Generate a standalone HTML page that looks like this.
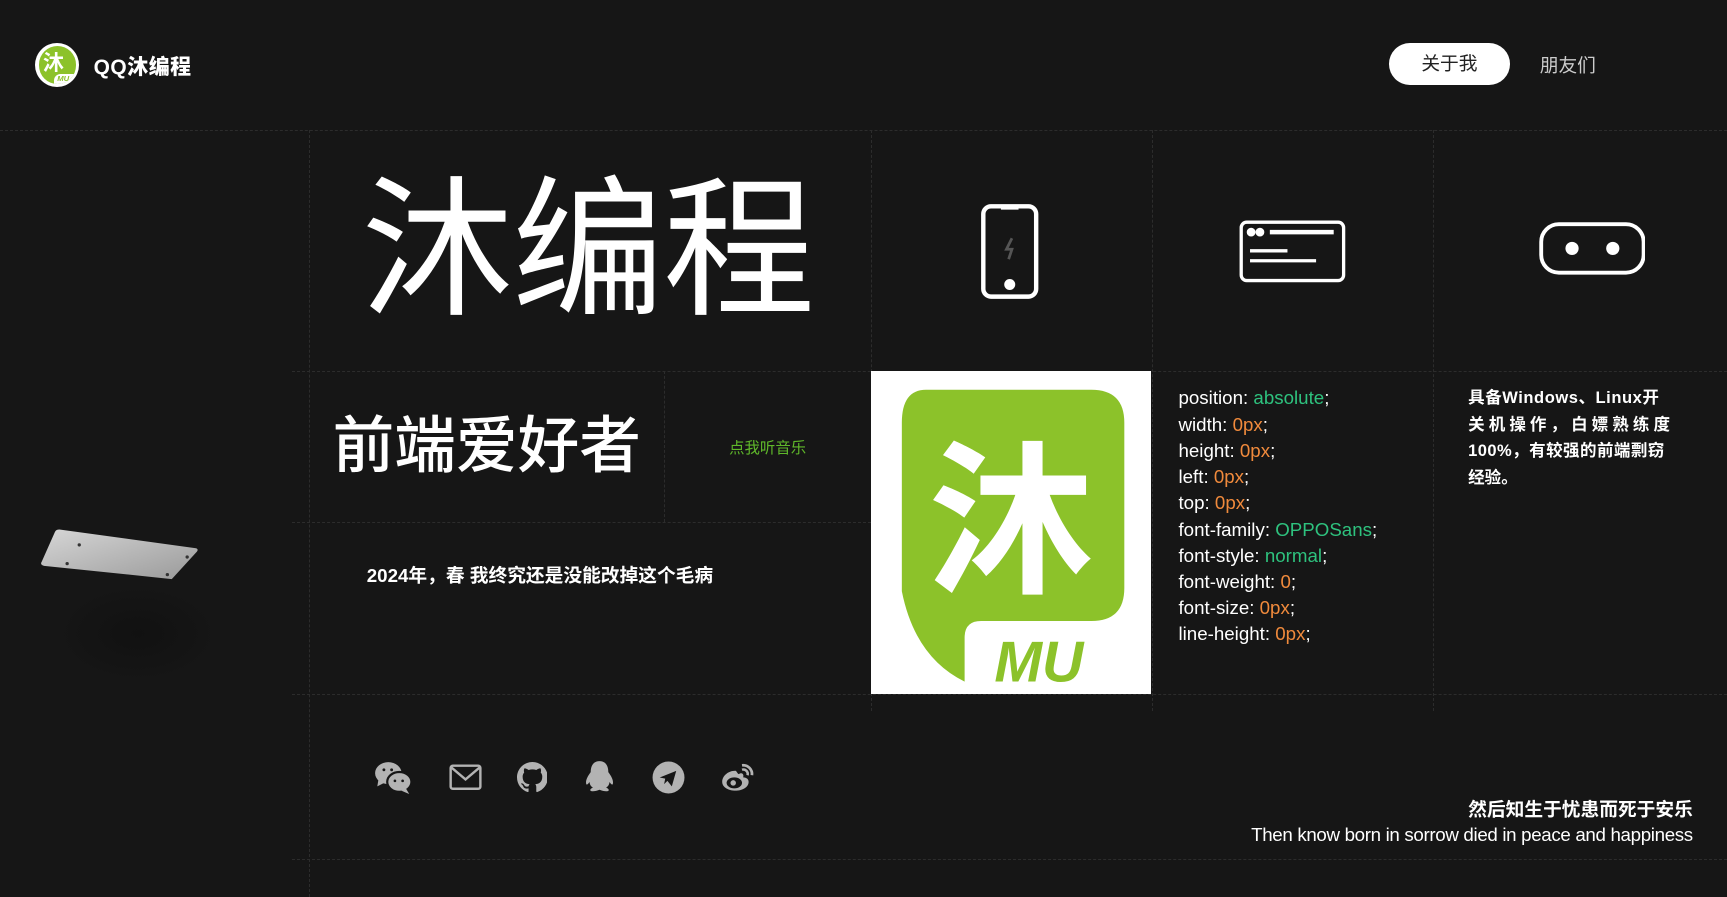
<!DOCTYPE html>
<html><head><meta charset="utf-8"><style>
html,body{margin:0;padding:0;background:#161616;overflow:hidden}
#w{position:relative;width:1568px;height:814px;zoom:1.10140;font-family:"Liberation Sans","Noto Sans CJK SC",sans-serif;color:#fff}
.a{position:absolute}
.h{position:absolute;height:0;border-top:1px dashed #2c2c2c}
.v{position:absolute;width:0;border-left:1px dashed #2c2c2c}
.css{position:absolute;left:1070px;top:350px;font-size:17px;line-height:23.8px;color:#fff}
.g{color:#2ec27e}.o{color:#f08a3c}
.n{white-space:nowrap;height:24px;overflow:visible}
</style></head><body><div id="w">
<div class="a" style="left:32px;top:39px;width:40px;height:40px;border-radius:50%;background:#fff;"></div>
<div class="a" style="left:35px;top:42px;width:34px;height:34px;border-radius:50%;background:#8cc22a;overflow:hidden">
<div class="a" style="left:4px;top:1px;font-size:19px;font-weight:bold;color:#fff">沐</div>
<div class="a" style="left:14px;top:25px;width:22px;height:12px;background:#fff;border-radius:6px 0 0 0"></div>
<div class="a" style="left:17px;top:25px;font-size:7px;font-weight:bold;color:#8cc22a;font-style:italic">MU</div></div>
<div class="a" style="left:85px;top:46px;font-size:19px;font-weight:900;letter-spacing:0.5px">QQ沐编程</div>
<div class="a" style="left:1261px;top:39px;width:110px;height:38px;border-radius:19px;background:#fff;color:#222;font-size:17px;line-height:38px;text-align:center">关于我</div>
<div class="a" style="left:1398px;top:46px;font-size:17px;color:#ccc">朋友们</div>
<div class="h" style="left:0;right:0;top:118px"></div>
<div class="h" style="left:265px;right:0;top:337px"></div>
<div class="h" style="left:265px;width:526px;top:474px"></div>
<div class="h" style="left:265px;right:0;top:630px"></div>
<div class="h" style="left:265px;right:0;top:780px"></div>
<div class="v" style="left:281px;top:118px;bottom:0"></div>
<div class="v" style="left:791px;top:118px;height:528px"></div>
<div class="v" style="left:1046px;top:118px;height:528px"></div>
<div class="v" style="left:1301px;top:118px;height:528px"></div>
<div class="v" style="left:603px;top:337px;height:137px"></div>
<div class="a" style="left:328px;top:148px;font-size:138px;line-height:160px;font-weight:normal;letter-spacing:-1px">沐编程</div>
<svg class="a" style="left:890px;top:184px" width="54" height="88" viewBox="0 0 54 88" fill="none" stroke="#fff" stroke-width="4"><rect x="3" y="3" width="48" height="82" rx="7"/><line x1="19" y1="4" x2="35" y2="4"/><circle cx="27" cy="74" r="3" fill="#fff"/><path d="M29 32l-5 10h5l-3 9" stroke="#555" stroke-width="2.5"/></svg>
<svg class="a" style="left:1125px;top:200px" width="97" height="57" viewBox="0 0 97 57" fill="none" stroke="#fff" stroke-width="3"><rect x="2" y="2" width="93" height="53" rx="5"/><circle cx="11" cy="11" r="2.5" fill="#fff"/><circle cx="19" cy="11" r="2.5" fill="#fff"/><line x1="28" y1="11" x2="86" y2="11" stroke-width="4"/><line x1="10" y1="28" x2="44" y2="28"/><line x1="10" y1="37" x2="70" y2="37"/></svg>
<svg class="a" style="left:1397px;top:202px" width="97" height="48" viewBox="0 0 97 48" fill="none" stroke="#fff" stroke-width="3.5"><rect x="2" y="2" width="93" height="44" rx="16"/><circle cx="30" cy="24" r="6" fill="#fff" stroke="none"/><circle cx="67" cy="24" r="6" fill="#fff" stroke="none"/></svg>
<div class="a" style="left:302px;top:370px;font-size:56px;line-height:70px;font-weight:500">前端爱好者</div>
<div class="a" style="left:662px;top:396px;font-size:14px;color:#5fb82a">点我听音乐</div>
<div class="a" style="left:333px;top:509px;font-size:17px;font-weight:bold">2024年，春 我终究还是没能改掉这个毛病</div>
<div class="a" style="left:791px;top:337px;width:254px;height:293px;background:#fff;overflow:hidden">
<svg width="254" height="293" viewBox="0 0 254 293"><path d="M50 17h150q30 0 30 30v150q0 30-30 30H100q-15 0-15 15v40Q40 260 28 200V47q0-30 22-30z" fill="#8cc22a"/><text x="52" y="190" font-size="150" font-weight="bold" fill="#fff" font-family="Noto Sans CJK SC,sans-serif">沐</text><text x="112" y="282" font-size="52" font-weight="bold" font-style="italic" fill="#8cc22a" font-family="Liberation Sans,sans-serif">MU</text></svg></div>
<div class="css">position: <span class="g">absolute</span>;<br>width: <span class="o">0px</span>;<br>height: <span class="o">0px</span>;<br>left: <span class="o">0px</span>;<br>top: <span class="o">0px</span>;<br>font-family: <span class="g">OPPOSans</span>;<br>font-style: <span class="g">normal</span>;<br>font-weight: <span class="o">0</span>;<br>font-size: <span class="o">0px</span>;<br>line-height: <span class="o">0px</span>;</div>
<div class="a" style="left:1333px;top:350px;width:200px;font-size:15px;line-height:24px;font-weight:bold">
<div class="n" style="letter-spacing:0.5px">具备Windows、Linux开</div><div class="n" style="letter-spacing:3.7px">关机操作，白嫖熟练度</div><div class="n" style="letter-spacing:0.4px">100%，有较强的前端剽窃</div><div class="n">经验。</div></div>
<div class="a" style="left:50px;top:530px;width:150px;height:90px;border-radius:50%;background:radial-gradient(#111,#161616 70%)"></div>
<svg class="a" style="left:30px;top:476px" width="155" height="56" viewBox="0 0 155 56"><defs><linearGradient id="p" x1="0" y1="0" x2="1" y2="1"><stop offset="0" stop-color="#d6d6d6"/><stop offset="1" stop-color="#9a9a9a"/></linearGradient></defs><path d="M24 5l124 17q3 1 0 4L126 50 10 38q-4-1-2-4L20 7q1-2 4-2z" fill="url(#p)"/><circle cx="42" cy="19" r="1.5" fill="#333"/><circle cx="31" cy="36" r="1.5" fill="#333"/><circle cx="140" cy="30" r="1.5" fill="#333"/><circle cx="122" cy="46" r="1.5" fill="#333"/></svg>
<svg class="a" style="left:340px;top:691px" width="36" height="30" viewBox="0 0 36 30" fill="#b3b3b3"><ellipse cx="13" cy="11" rx="12" ry="10"/><path d="M4 17l-1 6 6-3z"/><ellipse cx="23" cy="19" rx="11" ry="9" stroke="#161616" stroke-width="2"/><path d="M29 25l3 5-7-3z"/><circle cx="9" cy="8" r="1.3" fill="#161616"/><circle cx="16" cy="8" r="1.3" fill="#161616"/><circle cx="19" cy="18" r="1.2" fill="#161616"/><circle cx="26" cy="18" r="1.2" fill="#161616"/></svg>
<svg class="a" style="left:408px;top:694px" width="30" height="24" viewBox="0 0 30 24" fill="none" stroke="#b3b3b3" stroke-width="2.2"><rect x="1.5" y="1.5" width="27" height="21" rx="2"/><path d="M2 3l13 11 13-11"/></svg>
<svg class="a" style="left:469px;top:692px" width="28" height="28" viewBox="0 0 16 16" fill="#b3b3b3"><path d="M8 0C3.58 0 0 3.58 0 8c0 3.54 2.29 6.53 5.47 7.59.4.07.55-.17.55-.38 0-.19-.01-.82-.01-1.49-2.01.37-2.53-.49-2.69-.94-.09-.23-.48-.94-.82-1.13-.28-.15-.68-.52-.01-.53.63-.01 1.08.58 1.23.82.72 1.21 1.87.87 2.33.66.07-.52.28-.87.51-1.07-1.78-.2-3.64-.89-3.64-3.95 0-.87.31-1.59.82-2.15-.08-.2-.36-1.02.08-2.12 0 0 .67-.21 2.2.82.64-.18 1.32-.27 2-.27.68 0 1.36.09 2 .27 1.53-1.04 2.2-.82 2.2-.82.44 1.1.16 1.92.08 2.12.51.56.82 1.27.82 2.15 0 3.07-1.87 3.75-3.65 3.95.29.25.54.73.54 1.48 0 1.07-.01 1.93-.01 2.2 0 .21.15.46.55.38A8.013 8.013 0 0016 8c0-4.42-3.58-8-8-8z"/></svg>
<svg class="a" style="left:529px;top:690px" width="30" height="32" viewBox="0 0 30 32" fill="#b3b3b3"><path d="M15 1c-6 0-8 5-8 10-3 4-5 8-4 11 1 1 2-1 3-2 0 2 1 4 3 5-2 1-3 2-2 3 2 1 5 0 8-1 3 1 6 2 8 1 1-1 0-2-2-3 2-1 3-3 3-5 1 1 2 3 3 2 1-3-1-7-4-11 0-5-2-10-8-10z"/></svg>
<svg class="a" style="left:592px;top:691px" width="30" height="30" viewBox="0 0 30 30"><circle cx="15" cy="15" r="14.5" fill="#b3b3b3"/><path d="M7 15l15-6-4 14-4-5-3 3 1-5z" fill="#161616"/></svg>
<svg class="a" style="left:654px;top:692px" width="32" height="28" viewBox="0 0 32 28" fill="none" stroke="#b3b3b3"><path d="M14 8C7 8 2 13 2 18s6 8 12 8 12-3 12-8c0-3-3-4-5-4 1-3-1-5-4-3-1 0-2-3-3-3z" fill="#b3b3b3" stroke="none"/><ellipse cx="13" cy="19" rx="7" ry="5" fill="#161616" stroke="none"/><circle cx="12" cy="19" r="2.5" fill="#b3b3b3" stroke="none"/><path d="M20 3a8 8 0 0 1 9 9" stroke-width="2.5"/><path d="M20 7a4 4 0 0 1 5 5" stroke-width="2.3"/></svg>
<div class="a" style="right:31px;top:722px;font-size:17px;font-weight:bold;text-align:right">然后知生于忧患而死于安乐</div>
<div class="a" style="right:31px;top:748px;font-size:17px;text-align:right;letter-spacing:-0.3px">Then know born in sorrow died in peace and happiness</div>
</div></body></html>
